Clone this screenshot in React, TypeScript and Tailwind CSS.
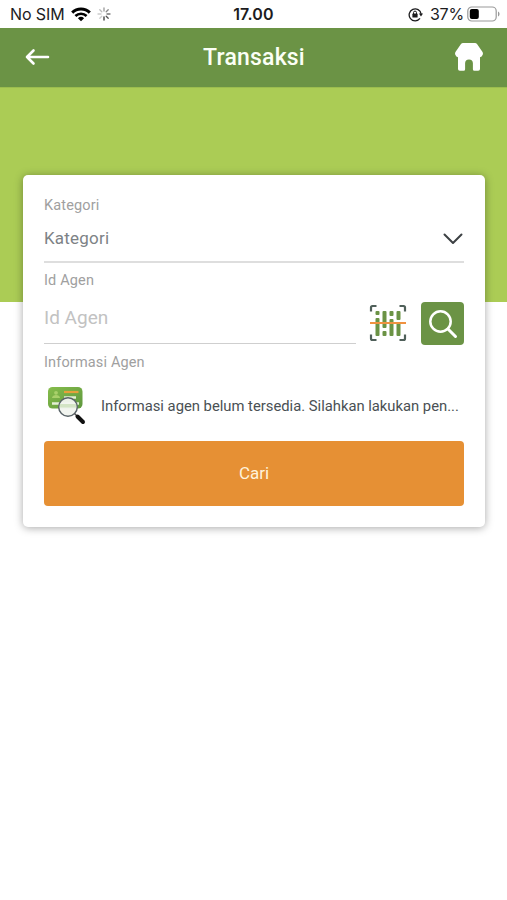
import React from "react";

const infoText = "Informasi agen belum tersedia. Silahkan lakukan pen...";

function StatusBar() {
  return (
    <div className="grid h-7 grid-cols-3 items-center bg-white font-['Inter','Liberation_Sans',sans-serif] text-[#1c1c1e]">
      <div className="flex items-center pl-[10px]">
        <span className="w-[55px] text-[16px] tracking-[-0.1px] whitespace-nowrap">No SIM</span>
        <svg className="ml-[6px] h-[15px] w-5" viewBox="0 0 20 15" fill="none" stroke="#000">
          <path d="M1.2 5.6a12.6 12.6 0 0 1 17.6 0" strokeWidth="3" />
          <path d="M4.4 9a8 8 0 0 1 11.2 0" strokeWidth="2.6" />
          <path d="M10 14.2 6.9 11.2a4.5 4.5 0 0 1 6.2 0z" fill="#000" stroke="none" />
        </svg>
        <svg className="ml-[6px] h-[14px] w-[14px]" viewBox="0 0 14 14" strokeWidth="1.3" strokeLinecap="round">
          <path d="M7 1v3" stroke="#999" />
          <path d="m11.2 2.8-2 2" stroke="#888" />
          <path d="M13 7h-3" stroke="#777" />
          <path d="m11.2 11.2-2-2" stroke="#555" />
          <path d="M7 13v-3" stroke="#333" />
          <path d="m2.8 11.2 2-2" stroke="#ccc" />
          <path d="M1 7h3" stroke="#ccc" />
          <path d="m2.8 2.8 2 2" stroke="#bbb" />
        </svg>
      </div>
      <span className="text-center text-[16px] font-semibold tracking-[0.2px]">17.00</span>
      <div className="flex items-center justify-end pr-[7px]">
        <svg className="mr-[7px] h-[15px] w-[15px]" viewBox="0 0 15 15" fill="none" stroke="#1c1c1e">
          <path d="M12 11.4A6 6 0 1 1 13.1 7" strokeWidth="1.3" />
          <path d="M10.9 6.6h4.1l-2 2.8z" fill="#1c1c1e" stroke="none" />
          <rect x="4.4" y="6.6" width="5.2" height="4" rx=".6" fill="#1c1c1e" stroke="none" />
          <path d="M5.5 7V5.6a1.5 1.5 0 0 1 3 0V7" strokeWidth="1" />
        </svg>
        <span className="text-[16px] tracking-[-0.2px]">37%</span>
        <svg className="ml-[3px] h-4 w-[33px]" viewBox="0 0 33 16">
          <rect x=".8" y="1" width="28.4" height="14" rx="4" fill="none" stroke="#999" strokeWidth="1.2" />
          <rect x="2.8" y="3" width="9" height="10" rx="2" fill="#000" />
          <path d="M31 5.5c2 .8 2 4.2 0 5z" fill="#999" />
        </svg>
      </div>
    </div>
  );
}

function ScanIcon() {
  return (
    <svg className="h-[38px] w-[38px]" viewBox="0 0 38 38" fill="none">
      <path
        d="M2 7.5v-4A1.5 1.5 0 0 1 3.5 2h4M30.5 2h4A1.5 1.5 0 0 1 36 3.5v4M36 30.5v4a1.5 1.5 0 0 1-1.5 1.5h-4M7.5 36h-4A1.5 1.5 0 0 1 2 34.5v-4"
        stroke="#50605a"
        strokeWidth="2.2"
      />
      <g fill="#6b9345">
        <rect x="6.5" y="7" width="4" height="4" rx="1" />
        <rect x="6.5" y="14" width="4" height="18" rx="1" />
        <rect x="13.5" y="7" width="4" height="17" rx="1" />
        <rect x="13.5" y="27" width="4" height="5" rx="1" />
        <rect x="20.5" y="7" width="4" height="5" rx="1" />
        <rect x="20.5" y="15" width="4" height="17" rx="1" />
        <rect x="27.5" y="7" width="4" height="9" rx="1" />
        <rect x="27.5" y="18.5" width="4" height="13.5" rx="1" />
      </g>
      <path d="M1 19h36" stroke="#f09240" strokeWidth="2" />
    </svg>
  );
}

function AgentCardIcon() {
  return (
    <svg className="h-[38px] w-[38px] shrink-0" viewBox="0 0 38 38" fill="none">
      <defs>
        <linearGradient id="agentCard" x1="0" y1="0" x2="1" y2="1">
          <stop offset="0" stopColor="#86bd4b" />
          <stop offset="1" stopColor="#5e973e" />
        </linearGradient>
      </defs>
      <rect x="0" y="0" width="34.5" height="21.5" rx="4.5" fill="url(#agentCard)" />
      <circle cx="8" cy="5.8" r="1.9" fill="#a9d06a" />
      <path d="M4 11c0-4 8-4 8 0z" fill="#a9d06a" />
      <path d="M16 5h14.5" stroke="#e7a03b" strokeWidth="2.2" />
      <path d="M16 10.5h12M4 16.5h27" stroke="#e4f0d5" strokeWidth="2.5" />
      <circle cx="20" cy="20" r="9.3" fill="#f1f5ef" fillOpacity=".96" stroke="#596368" strokeWidth="1.4" />
      <path d="M12 17h16v3.5H12z" fill="#d3e4c5" />
      <path d="m26.5 26.5 2.5 2.5" stroke="#555" strokeWidth="1.5" />
      <path d="m29.5 29.5 5.5 5.500" stroke="#111" strokeWidth="4" strokeLinecap="round" />
    </svg>
  );
}

export default function App() {
  return (
    <div className="min-h-[900px] w-full bg-white font-[Roboto,sans-serif]">
      <StatusBar />

      <header className="flex h-[59px] items-center justify-between bg-[#6b9345] pr-[24px] pl-[25px]">
        <svg className="mb-[2px] h-[18px] w-[26px]" viewBox="0 0 26 18" fill="none" stroke="#fff" strokeWidth="2.6" strokeLinecap="round" strokeLinejoin="round">
          <path d="M23 9H2M8.5 2.5 2 9l6.5 6.5" />
        </svg>
        <h1 className="pt-[2px] pl-[2px] text-[23px] font-medium tracking-[0.2px] text-[#fbfff5]">Transaksi</h1>
        <svg className="mb-[2px] h-7 w-7" viewBox="0 0 28 28" fill="#fff">
          <path d="M6 1Q6.800 0 8 0h12q1.200 0 2 1l5.200 7.500q1.200 1.700.5 3.200-.8 2-2.700 2.500V26q0 1.800-1.800 1.800h-3.800q-1.500 0-1.500-1.500v-6a3.900 3.900 0 0 0-7.800 0v6q0 1.500-1.500 1.500H4.800Q3 27.800 3 26V14.200q-1.900-.5-2.700-2.500Q-.400 10.200.8 8.500z" />
        </svg>
      </header>

      <div className="h-[215px] border-t border-[#9bbd4e] bg-[#abcc55]" />

      <main className="relative -mt-[127px] ml-[23px] h-[352px] w-[462px] rounded-[5px] bg-white px-[21px] pt-[21px] shadow-[0_1px_9px_rgba(0,0,0,0.35)]">
        <p className="h-5 text-[14.5px] leading-5 tracking-[0.15px] text-[#a0a0a0]">Kategori</p>
        <div className="flex h-[47px] items-center justify-between border-b-2 border-[#dedede]">
          <span className="text-[17px] tracking-[0.2px] text-[#7d8286]">Kategori</span>
          <svg className="mr-px h-3 w-5" viewBox="0 0 20 12" fill="none" stroke="#3d4144" strokeWidth="2" strokeLinecap="round" strokeLinejoin="round">
            <path d="m1.5 1.5 8.500 8.500 8.500-8.500" />
          </svg>
        </div>

        <p className="mt-[8px] h-5 text-[14.5px] leading-5 tracking-[0.15px] text-[#a0a0a0]">Id Agen</p>
        <div className="flex items-start">
          <div className="flex h-[53px] w-[312px] items-center border-b border-[#cfcfcf] pt-[2px]">
            <span className="text-[19px] text-[#c2c2c2]">Id Agen</span>
          </div>
          <div className="mt-[13px] ml-[13px]">
            <ScanIcon />
          </div>
          <button className="mt-[11px] ml-[14px] flex h-[43px] w-[43px] items-center justify-center rounded-[4px] bg-[#6b9345]">
            <svg className="h-[30px] w-[30px]" viewBox="0 0 30 30" fill="none" stroke="#fff" strokeLinecap="round">
              <circle cx="12.5" cy="12.5" r="10.2" strokeWidth="2.5" />
              <path d="m20 20 7.5 7.5" strokeWidth="3" />
            </svg>
          </button>
        </div>

        <p className="mt-[8px] h-5 text-[14.5px] leading-5 tracking-[0.15px] text-[#a0a0a0]">Informasi Agen</p>
        <div className="mt-[13px] flex h-[40px] items-center pl-1">
          <AgentCardIcon />
          <p className="ml-[15px] text-[14.8px] tracking-[-0.01px] whitespace-nowrap text-[#4a5054]">{infoText}</p>
        </div>
        <button className="mt-[15px] h-[65px] w-full rounded-[4px] bg-[#e69034] text-[17px] text-[#fff3dc]">Cari</button>
      </main>
    </div>
  );
}
